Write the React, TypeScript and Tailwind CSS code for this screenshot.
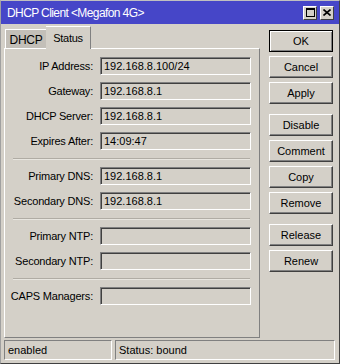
import React from 'react';

const font = { fontFamily: '"Liberation Sans", Arial, sans-serif' };

type Field = { label: string; value: string };

const groups: Field[][] = [
  [
    { label: 'IP Address:', value: '192.168.8.100/24' },
    { label: 'Gateway:', value: '192.168.8.1' },
    { label: 'DHCP Server:', value: '192.168.8.1' },
    { label: 'Expires After:', value: '14:09:47' },
  ],
  [
    { label: 'Primary DNS:', value: '192.168.8.1' },
    { label: 'Secondary DNS:', value: '192.168.8.1' },
  ],
  [
    { label: 'Primary NTP:', value: '' },
    { label: 'Secondary NTP:', value: '' },
  ],
  [{ label: 'CAPS Managers:', value: '' }],
];

const buttonGroups = [
  ['OK', 'Cancel', 'Apply'],
  ['Disable', 'Comment', 'Copy', 'Remove'],
  ['Release', 'Renew'],
];

const Row = ({ label, value }: Field) => (
  <div className="flex h-[18px] items-center">
    <div className="w-[88px] text-right text-[11px] tracking-[-0.2px] text-black">{label}</div>
    <div className="ml-[7px] flex h-[18px] w-[151px] items-center border-t border-l border-t-[#808080] border-l-[#808080] border-b border-r border-b-white border-r-white bg-[#d4d0c8] pl-[3px] text-[11px] text-black shadow-[inset_1px_1px_0_#404040]">
      {value}
    </div>
  </div>
);

const WinButton = ({ label, isDefault }: { label: string; isDefault?: boolean }) => (
  <button
    className={
      isDefault
        ? 'h-[22px] w-[64px] border border-black bg-[#d4d0c8] text-[11px] text-black shadow-[inset_1px_1px_0_#ffffff,inset_-1px_-1px_0_#808080]'
        : 'h-[22px] w-[64px] border-t border-l border-t-white border-l-white border-b border-r border-b-[#404040] border-r-[#404040] bg-[#d4d0c8] text-[11px] text-black shadow-[inset_-1px_-1px_0_#808080]'
    }
  >
    {label}
  </button>
);

export default function App() {
  return (
    <div
      style={font}
      className="flex h-[364px] w-[340px] flex-col border border-t-[#c0c0c0] border-l-[#a0a0a0] border-b-[#404040] border-r-[#404040] bg-[#d4d0c8]"
    >
      {/* Title bar */}
      <div className="flex h-[23px] items-center bg-[#4646c8] pl-[6px] pr-[5px]">
        <span className="text-[12px] tracking-[-0.6px] text-white">DHCP Client &lt;Megafon 4G&gt;</span>
        <div className="ml-auto flex gap-[3px]">
          <div className="flex h-[14px] w-[14px] items-center justify-center border-t border-l border-t-white border-l-white border-b border-r border-b-[#404040] border-r-[#404040] bg-[#d4d0c8]">
            <div className="h-[9px] w-[9px] border border-t-2 border-black" />
          </div>
          <div className="flex h-[14px] w-[14px] items-center justify-center border-t border-l border-t-white border-l-white border-b border-r border-b-[#404040] border-r-[#404040] bg-[#d4d0c8]">
            <svg width="8" height="7" viewBox="0 0 8 7">
              <path d="M0.5 0.5 L7.5 6.5 M7.5 0.5 L0.5 6.5" stroke="black" strokeWidth="1.6" />
            </svg>
          </div>
        </div>
      </div>

      <div className="flex">
        {/* Left: tabs + panel */}
        <div className="ml-[3px] flex flex-col">
          <div className="flex h-[24px] items-end pl-[1px]">
            <div className="flex h-[19px] w-[41px] items-center justify-center border-t border-l border-t-white border-l-white bg-[#c3bfb8] pt-[1px] text-[12px] tracking-[-0.3px] text-black">
              DHCP
            </div>
            <div className="relative z-10 -mb-px flex h-[23px] w-[45px] items-start justify-center border-t border-r border-t-white border-r-[#808080] bg-[#d4d0c8] pt-[3px] text-[11px] tracking-[-0.3px] text-black">
              Status
            </div>
          </div>
          <div className="h-[290px] w-[256px] border-t border-l border-t-white border-l-white border-b border-r border-b-[#808080] border-r-[#808080] pt-[8px]">
            {groups.map((g, gi) => (
              <div key={gi}>
                {gi > 0 && (
                  <div className="mb-[7px] ml-[8px] mt-[8px] w-[237px] border-t border-b border-t-[#b0aca4] border-b-[#e8e6e0]" />
                )}
                <div className="flex flex-col gap-[7px]">
                  {g.map((f) => (
                    <Row key={f.label} {...f} />
                  ))}
                </div>
              </div>
            ))}
          </div>
        </div>

        {/* Right: buttons */}
        <div className="ml-[9px] flex flex-col gap-[10px] pt-[6px]">
          {buttonGroups.map((g, gi) => (
            <div key={gi} className="flex flex-col gap-[4px]">
              {g.map((b) => (
                <WinButton key={b} label={b} isDefault={b === 'OK'} />
              ))}
            </div>
          ))}
        </div>
      </div>

      {/* Status bar */}
      <div className="ml-[3px] mt-[2px] flex gap-[3px]">
        <div className="flex h-[20px] w-[108px] items-center border-t border-l border-t-[#808080] border-l-[#808080] border-b border-r border-b-white border-r-white pl-[3px] text-[11px] text-black">
          enabled
        </div>
        <div className="flex h-[20px] w-[220px] items-center border-t border-l border-t-[#808080] border-l-[#808080] border-b border-r border-b-white border-r-white pl-[3px] text-[11px] text-black">
          Status: bound
        </div>
      </div>
    </div>
  );
}
